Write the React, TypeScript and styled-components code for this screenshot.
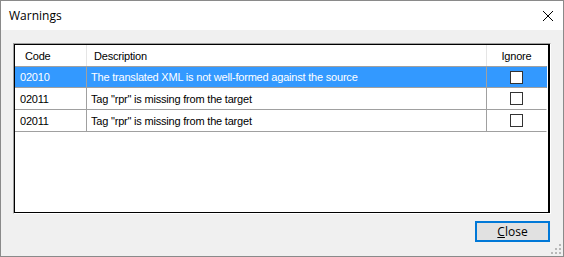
import * as React from "react";
import styled, { createGlobalStyle } from "styled-components";

const Global = createGlobalStyle`
  html, body {
    margin: 0;
    padding: 0;
    width: 564px;
    height: 257px;
    overflow: hidden;
    background: #f0f0f0;
  }
  * {
    box-sizing: border-box;
  }
`;

const Window = styled.div`
  width: 564px;
  height: 257px;
  border: 1px solid #8a8a8a;
  display: flex;
  flex-direction: column;
  font-family: "Liberation Sans", Arial, sans-serif;
  font-size: 11px;
  letter-spacing: -0.2px;
  color: #000;
  position: relative;
`;

const TitleBar = styled.div`
  height: 29px;
  background: #fff;
  display: flex;
  align-items: center;
  justify-content: space-between;
  padding: 0 9px 0 8px;
  font-family: "Open Sans", "Liberation Sans", sans-serif;
  font-size: 12px;
  letter-spacing: 0;
`;

const Body = styled.div`
  flex: 1;
  background: #f0f0f0;
  display: flex;
  flex-direction: column;
  padding: 13px 12px 0 12px;
`;

const ListOuter = styled.div`
  height: 171px;
  border-style: solid;
  border-width: 1px;
  border-color: #a0a0a0 #ffffff #ffffff #a0a0a0;
`;

const ListInner = styled.div`
  height: 100%;
  background: #fff;
  border: 1px solid #000;
  border-width: 1px 2px 1px 1px;
`;

const Table = styled.div`
  display: grid;
  grid-template-columns: 72px 400px 60px;
  width: 532px;
`;

const HeadCell = styled.div<{ $pad?: number; $last?: boolean }>`
  height: 21px;
  display: flex;
  align-items: center;
  justify-content: ${(p) => (p.$pad === undefined ? "center" : "flex-start")};
  padding-left: ${(p) => p.$pad ?? 0}px;
  border-right: 1px solid ${(p) => (p.$last ? "transparent" : "#e5e5e5")};
  background: #fff;
`;

const Cell = styled.div<{ $selected?: boolean; $center?: boolean; $last?: boolean; $pad?: number }>`
  height: 22px;
  display: flex;
  align-items: center;
  justify-content: ${(p) => (p.$center ? "center" : "flex-start")};
  padding-left: ${(p) => (p.$center ? 0 : p.$pad ?? 4)}px;
  border-right: 1px solid ${(p) => (p.$last ? "transparent" : "#a0a0a0")};
  border-bottom: 1px solid #a0a0a0;
  border-top: ${(p) => (p.$selected ? "1px solid #a0a0a0" : "none")};
  background: ${(p) => (p.$selected ? "#3399ff" : "#fff")};
  color: ${(p) => (p.$selected ? "#fff" : "#000")};
`;

const Check = styled.span`
  width: 13px;
  height: 13px;
  border: 1px solid #333;
  background: #fff;
`;

const Footer = styled.div`
  flex: 1;
  display: flex;
  justify-content: flex-end;
  align-items: flex-start;
  padding-top: 7px;
`;

const Button = styled.button`
  width: 75px;
  height: 21px;
  border: 2px solid #0078d7;
  background: #e1e1e1;
  font-family: "Open Sans", "Liberation Sans", sans-serif;
  font-size: 12px;
  padding: 0;
  margin-right: 1px;
  color: #000;
`;

const Grip = styled.svg`
  position: absolute;
  right: 2px;
  bottom: 2px;
`;

const rows = [
  { code: "02010", text: "The translated XML is not well-formed against the source" },
  { code: "02011", text: 'Tag "rpr" is missing from the target' },
  { code: "02011", text: 'Tag "rpr" is missing from the target' },
];

export default function App() {
  return (
    <Window>
      <Global />
      <TitleBar>
        <span>Warnings</span>
        <svg width="12" height="12" viewBox="0 0 12 12">
          <path d="M1 1 L11 11 M11 1 L1 11" stroke="#000" strokeWidth="1" />
        </svg>
      </TitleBar>
      <Body>
        <ListOuter>
          <ListInner>
            <Table>
              <HeadCell $pad={10}>Code</HeadCell>
              <HeadCell $pad={7}>Description</HeadCell>
              <HeadCell $last>Ignore</HeadCell>
              {rows.map((r, i) => (
                <React.Fragment key={i}>
                  <Cell $selected={i === 0} $pad={5}>{r.code}</Cell>
                  <Cell $selected={i === 0} $pad={4}>{r.text}</Cell>
                  <Cell $selected={i === 0} $center $last>
                    <Check />
                  </Cell>
                </React.Fragment>
              ))}
            </Table>
          </ListInner>
        </ListOuter>
        <Footer>
          <Button>
            <u>C</u>lose
          </Button>
        </Footer>
      </Body>
      <Grip width="10" height="10" viewBox="0 0 10 10">
        {[
          [8, 0],
          [8, 4],
          [4, 4],
          [8, 8],
          [4, 8],
          [0, 8],
        ].map(([x, y], i) => (
          <rect key={i} x={x} y={y} width="2" height="2" fill="#b8b8b8" />
        ))}
      </Grip>
    </Window>
  );
}
